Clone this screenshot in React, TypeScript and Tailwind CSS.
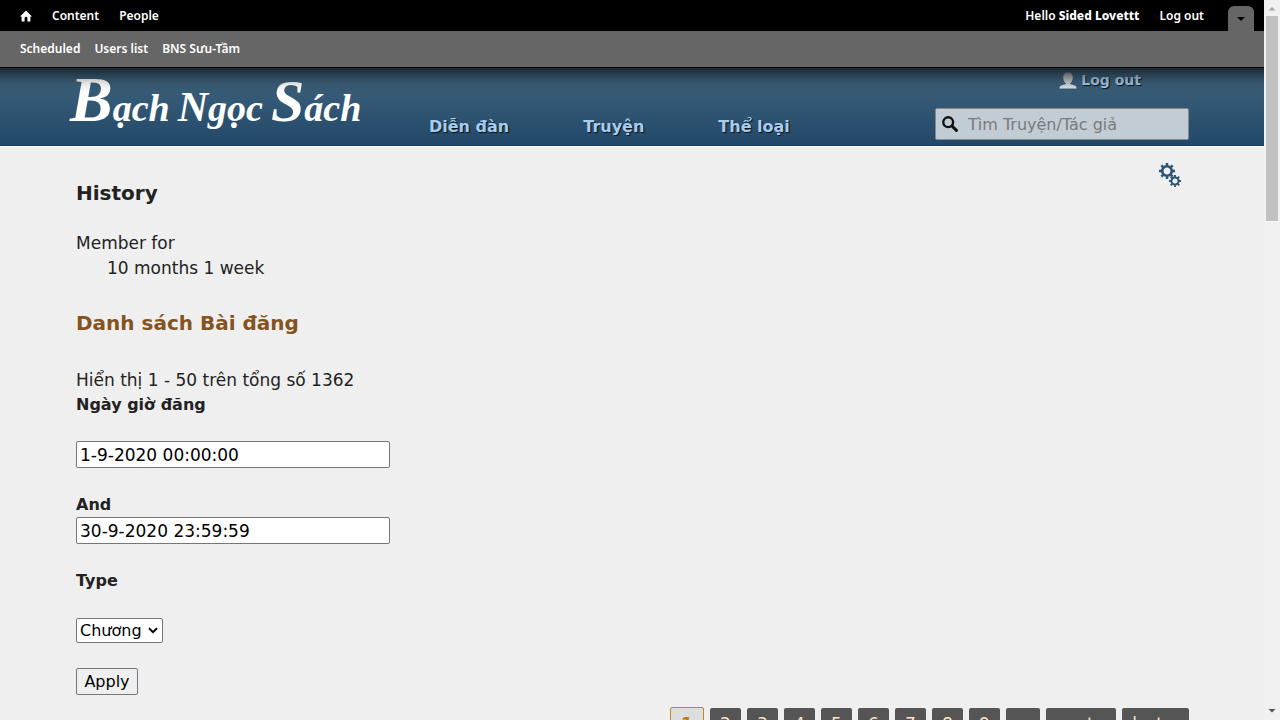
import { useState } from "react";

const verdana = "font-['DejaVu_Sans',Verdana,sans-serif]";

const pages = ["2", "3", "4", "5", "6", "7", "8", "9"];

function AdminToolbar() {
  const [open, setOpen] = useState(true);

  return (
    <div className="relative z-10 border-b border-black bg-[#666] font-['Noto_Sans',sans-serif] text-xs font-semibold text-white shadow-[0_-17px_20px_20px_#000]">
      <div className="flex h-[31px] items-center justify-between bg-black pl-5 pr-[10px]">
        <nav className="flex items-center gap-5">
          <a href="#home" aria-label="Home">
            <svg className="h-3 w-3" viewBox="0 0 12 12" fill="#fff">
              <path d="M6 0.6 L12 6.6 H10.4 V11.4 H7.4 V8.2 A1.4 1.4 0 0 0 4.6 8.2 V11.4 H1.6 V6.6 H0 Z" />
            </svg>
          </a>
          <a href="#content">Content</a>
          <a href="#people">People</a>
        </nav>
        <div className="flex h-full items-center gap-5">
          <a href="#user">
            Hello <strong className="font-extrabold">Sided Lovettt</strong>
          </a>
          <a href="#logout">Log out</a>
          <button
            type="button"
            aria-label="Toggle shortcuts"
            className="ml-1 flex h-[25px] w-[26px] items-center justify-center self-end rounded-t-md bg-[#666]"
            onClick={() => setOpen(!open)}
          >
            <svg className="h-1 w-2" viewBox="0 0 8 4">
              <path d="M0 0 H8 L4 4 Z" fill="#000" />
            </svg>
          </button>
        </div>
      </div>

      {/* Shortcuts drawer */}
      {open && (
        <nav className="flex h-9 items-center gap-[14px] pl-5">
          <a href="#scheduled">Scheduled</a>
          <a href="#users">Users list</a>
          <a href="#bns">BNS Sưu-Tầm</a>
        </nav>
      )}
    </div>
  );
}

function SiteHeader() {
  return (
    <header className="flex h-[78px] justify-between border-b border-[#143a5c] bg-linear-to-b from-[#42667f] to-[#224869] pl-[70px] pr-[75px]">
      <div className="flex">
        <a
          href="#front"
          className="flex w-[288px] items-baseline gap-2 font-['Liberation_Serif',serif] text-[38px] leading-[64px] font-bold italic text-white"
        >
          <span className="block first-letter:text-[64px]">Bạch</span>
          <span className="block first-letter:text-[42px]">Ngọc</span>
          <span className="block first-letter:text-[60px]">Sách</span>
        </a>
        <nav className="flex items-end gap-[74px] pb-[6px] pl-[71px] text-base font-bold text-[#a4cdf0] [text-shadow:1px_1px_1px_#111]">
          <a href="#forum">Diễn đàn</a>
          <a href="#stories">Truyện</a>
          <a href="#genres">Thể loại</a>
        </nav>
      </div>
      <div className="flex w-[254px] flex-col">
        <a
          href="#logout"
          className="mt-[2px] mr-12 flex h-5 items-center gap-1 self-end text-sm font-bold text-[#a4cdf0] [text-shadow:1px_1px_1px_#111]"
        >
          <svg className="h-[17px] w-[18px]" viewBox="0 0 18 17">
            <defs>
              <linearGradient id="user" x1="0" y1="0" x2="0" y2="1">
                <stop offset="0" stopColor="#a4a8ab" />
                <stop offset="1" stopColor="#dfe4e8" />
              </linearGradient>
            </defs>
            <path
              d="M9 0.5 C12 0.5 13.8 2.4 13.8 5.4 C13.8 8.2 12.4 10.6 11 11.4 V12 L16 13.4 Q17.6 14 17.6 16.5 H0.4 Q0.4 14 2 13.4 L7 12 V11.4 C5.6 10.6 4.2 8.2 4.2 5.4 C4.2 2.4 6 0.5 9 0.5 Z"
              fill="url(#user)"
            />
          </svg>
          Log out
        </a>
        <label className="mt-[18px] flex h-8 items-center gap-[10px] rounded-xs border border-[#888] bg-[#c2ccd5] pl-[6px]">
          <svg className="h-4 w-4 shrink-0" viewBox="0 0 16 16" fill="none" stroke="#111">
            <circle cx="6.2" cy="6.2" r="4.9" strokeWidth="2.4" />
            <path d="M10 10 L14.4 14.4" strokeWidth="3" strokeLinecap="round" />
          </svg>
          <input
            type="search"
            aria-label="Tìm Truyện/Tác giả"
            placeholder="Tìm Truyện/Tác giả"
            className="w-full bg-transparent pt-[2px] text-base outline-none placeholder:text-[#7a7a7a]"
          />
        </label>
      </div>
    </header>
  );
}

function Cog({ x, y, r }: { x: number; y: number; r: number }) {
  return (
    <g transform={`translate(${x} ${y}) scale(${r / 8})`} stroke="#2a5375" fill="none">
      <circle r="4.8" strokeWidth="2.6" />
      {[0, 45, 90, 135, 180, 225, 270, 315].map((a) => (
        <path key={a} d="M0 -5.5 V-8" strokeWidth="2.6" transform={`rotate(${a})`} />
      ))}
    </g>
  );
}

function PostFilter() {
  const inputClass =
    "h-[27px] w-[314px] rounded-xs border border-[#767676] bg-white px-[3px] text-[17px] text-black";

  return (
    <form className="flex flex-col items-start" onSubmit={(e) => e.preventDefault()}>
      <label htmlFor="from" className="text-base leading-6 font-bold">
        Ngày giờ đăng
      </label>
      <input id="from" defaultValue="1-9-2020 00:00:00" className={`mt-6 ${inputClass}`} />
      <label htmlFor="to" className="mt-[25px] text-base leading-6 font-bold">
        And
      </label>
      <input id="to" defaultValue="30-9-2020 23:59:59" className={inputClass} />
      <label htmlFor="type" className="mt-[25px] text-base leading-6 font-bold">
        Type
      </label>
      <div className="relative mt-[25px]">
        <select
          id="type"
          className="h-[25px] w-[87px] appearance-none rounded-xs border border-[#767676] bg-white pl-[3px] text-base leading-[23px] text-black"
        >
          <option>Chương</option>
        </select>
        <svg
          className="pointer-events-none absolute top-[9px] right-[5px] h-[7px] w-[10px]"
          viewBox="0 0 10 7"
          fill="none"
          stroke="#000"
          strokeWidth="2"
        >
          <path d="M1 1.2 L5 5.2 L9 1.2" />
        </svg>
      </div>
      <button
        type="submit"
        className="mt-[25px] h-[27px] w-[62px] rounded-xs border border-[#767676] bg-[#efefef] text-base leading-6 text-black"
      >
        Apply
      </button>
    </form>
  );
}

function Pager() {
  const linkClass = "mt-px rounded-xs bg-[#555] py-1 text-center text-[#ffe4c0]";

  return (
    <nav className="mt-3 flex items-start justify-end gap-[6px] text-[17px]">
      <span className="w-[34px] rounded-xs border border-[#c8861a] bg-[#ddd] py-1 text-center font-bold text-[#c07a15]">
        1
      </span>
      {pages.map((p) => (
        <a key={p} href={`#page-${p}`} className={`w-[31px] ${linkClass}`}>
          {p}
        </a>
      ))}
      <span className={`w-[34px] ${linkClass}`}>…</span>
      <a href="#next" className={`w-[70px] ${linkClass}`}>
        next ›
      </a>
      <a href="#last" className={`w-[67px] ${linkClass}`}>
        last »
      </a>
    </nav>
  );
}

function Scrollbar() {
  return (
    <div className="flex w-4 shrink-0 flex-col items-center bg-[#f1f1f1]">
      <svg className="h-4 w-4 shrink-0" viewBox="0 0 16 16">
        <path d="M4.5 10.5 L8 7 L11.5 10.5 Z" fill="#a3a3a3" />
      </svg>
      <div className="h-[28.5%] w-3 bg-[#c1c1c1]" />
      <svg className="mt-auto h-4 w-4 shrink-0" viewBox="0 0 16 16">
        <path d="M4.5 5 H11.5 L8 8.5 Z" fill="#505050" />
      </svg>
    </div>
  );
}

export default function App() {
  return (
    <div className={`flex h-screen overflow-hidden bg-[#efefef] text-[#222] ${verdana}`}>
      <div className="min-w-0 flex-1 overflow-hidden">
        <AdminToolbar />
        <SiteHeader />
        <main className="border-t border-white pl-[76px] pr-[75px] text-[17px] leading-[25px]">
          <div className="flex items-start justify-between pt-4">
            <h2 className="mt-4 text-xl leading-7 font-bold">History</h2>
            <button type="button" aria-label="Settings" className="mr-2">
              <svg className="h-6 w-[22px]" viewBox="0 0 22 24">
                <Cog x={8} y={8} r={8} />
                <Cog x={16} y={18} r={6} />
              </svg>
            </button>
          </div>
          <dl className="mt-6">
            <dt>Member for</dt>
            <dd className="ml-[31px]">10 months 1 week</dd>
          </dl>
          <h2 className="mt-7 text-xl leading-7 font-bold text-[#845321]">Danh sách Bài đăng</h2>
          <p className="mt-[31px]">Hiển thị 1 - 50 trên tổng số 1362</p>
          <PostFilter />
          <Pager />
        </main>
      </div>
      <Scrollbar />
    </div>
  );
}
